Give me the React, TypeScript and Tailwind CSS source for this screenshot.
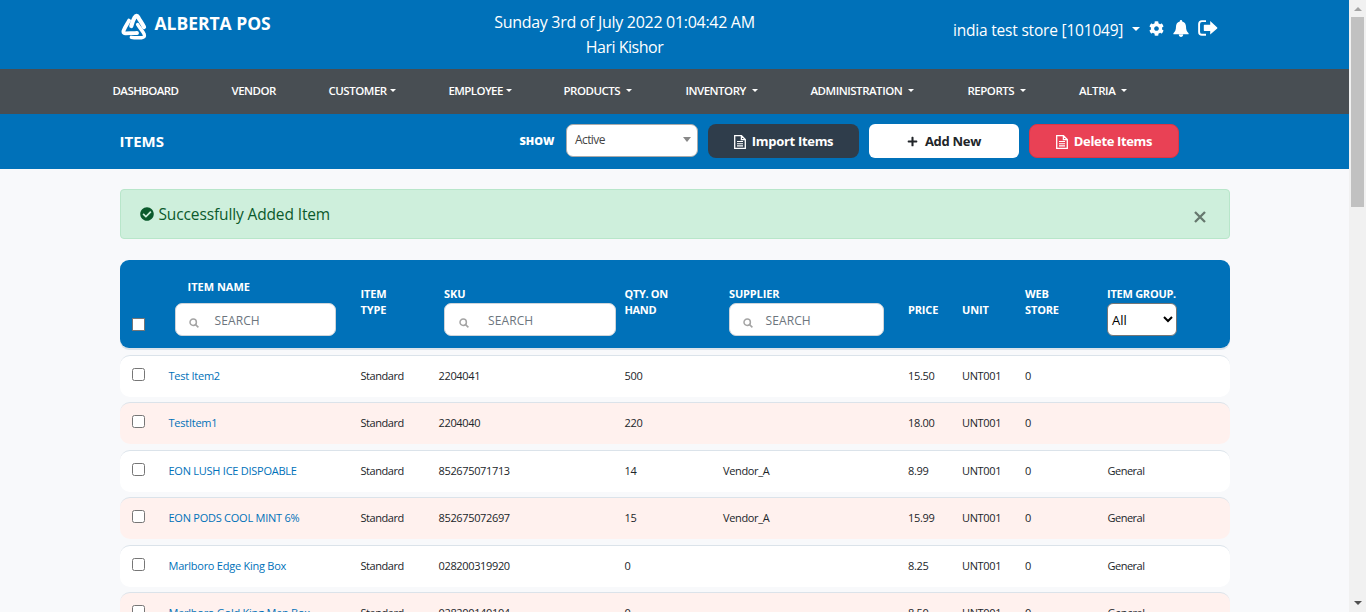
import React from "react";
import { FaCog, FaPlus, FaCheckCircle } from "react-icons/fa";

const Caret = ({ className = "" }: { className?: string }) => (
  <span className={"inline-block border-x-[3.5px] border-t-[3.5px] border-x-transparent border-t-white " + className} />
);

const FileIcon = () => (
  <svg viewBox="0 0 12 14" className="mt-[1px] h-[14px] w-[12px]" fill="none" stroke="currentColor" strokeWidth="1.3">
    <path d="M.7.7H7.5L11.3 4.5V13.3H.7ZM7.4.9V4.7H11.2" />
    <path d="M3 6.5H9M3 8.7H9M3 10.9H9" strokeWidth="1.1" />
  </svg>
);

const nav = [
  { t: "DASHBOARD", w: "w-[119px]", k: "tracking-[-0.56px]", c: "" },
  { t: "VENDOR", w: "w-[97px]", k: "tracking-[-0.5px]", c: "" },
  { t: "CUSTOMER", w: "w-[120px]", k: "tracking-[-0.48px]", c: "ml-[3px]" },
  { t: "EMPLOYEE", w: "w-[115px]", k: "tracking-[-0.6px]", c: "ml-[3px]" },
  { t: "PRODUCTS", w: "w-[122px]", k: "tracking-[-0.5px]", c: "ml-[6px]" },
  { t: "INVENTORY", w: "w-[125px]", k: "tracking-[-0.5px]", c: "ml-[6px]" },
  { t: "ADMINISTRATION", w: "w-[157px]", k: "tracking-[-0.48px]", c: "ml-[6px]" },
  { t: "REPORTS", w: "w-[111.5px]", k: "tracking-[-0.5px]", c: "ml-[6px]" },
  { t: "ALTRIA", w: "w-[80px]", k: "tracking-[-0.4px]", c: "ml-[6px]" },
];

const rows = [
  ["Test Item2", "Standard", "2204041", "500", "", "15.50", "UNT001", "0", ""],
  ["TestItem1", "Standard", "2204040", "220", "", "18.00", "UNT001", "0", ""],
  ["EON LUSH ICE DISPOABLE", "Standard", "852675071713", "14", "Vendor_A", "8.99", "UNT001", "0", "General"],
  ["EON PODS COOL MINT 6%", "Standard", "852675072697", "15", "Vendor_A", "15.99", "UNT001", "0", "General"],
  ["Marlboro Edge King Box", "Standard", "028200319920", "0", "", "8.25", "UNT001", "0", "General"],
  ["Marlboro Gold King Men Box", "Standard", "028200140104", "0", "", "8.50", "UNT001", "0", "General"],
];

const Check = ({ className = "" }: { className?: string }) => (
  <span className={"block size-[13px] shrink-0 rounded-[2.5px] border border-[#767676] bg-white " + className} />
);

const Search = ({ w, gap, icon }: { w: string; gap: string; icon: string }) => (
  <div className={"flex h-[33px] items-center rounded-[7px] border border-[#ced4da] bg-white " + w + " " + icon}>
    <svg viewBox="0 0 10 10" className="mt-[6px] size-[10px] shrink-0" fill="none" stroke="#a4a4a4" strokeWidth="1.5">
      <circle cx="4.2" cy="4.2" r="3.2" />
      <path d="M6.6 6.6 9.4 9.4" />
    </svg>
    <span className={"pt-[2px] text-[12px] font-normal tracking-[0.1px] text-[#6c757d] " + gap}>SEARCH</span>
  </div>
);

export default function App() {
  return (
    <div className="flex h-[612px] w-[1366px] overflow-hidden bg-[#f8f9fb] font-['Open_Sans','Noto_Sans',sans-serif] text-[#212529]">
      <div className="flex w-[1349px] shrink-0 flex-col overflow-hidden">
        <header className="flex h-[69px] shrink-0 bg-[#0071b9] pl-[121px] text-white">
          <div className="flex w-[264px] items-start pt-[13px]">
            <svg viewBox="0 0 26 27" className="h-[27px] w-[26px]" fill="none" stroke="#fff" strokeLinejoin="round" strokeLinecap="round">
              <path d="M8 7.6 C6.5 10.5 4.2 13.5 2.6 17.6 C1.9 20 3.2 20.4 5 20.3 C9 20 12.5 20.4 16 20" strokeWidth="3.8" />
              <path d="M10.3 13 C11 10 12 7.5 13.6 4.6 C15 2.2 16.3 2.6 17.4 4.6 C18.8 7.4 21 10 23 14" strokeWidth="4.2" />
              <path d="M16.6 11.5 C18.5 15 21.5 17.5 23.2 21.2 C24 23.6 23 24.6 20.6 24.7 C17 24.9 13.5 24.9 10.3 24.3" strokeWidth="3.4" />
            </svg>
            <span className="ml-[7.5px] text-[17.5px] leading-[21px] font-bold tracking-[-0.02px] whitespace-nowrap">ALBERTA POS</span>
          </div>
          <div className="w-[479px] pt-[10px] text-center text-[16px] leading-[25px]">
            <div className="tracking-[-0.3px]">Sunday 3rd of July 2022 01:04:42 AM</div>
            <div className="tracking-[-0.5px]">Hari Kishor</div>
          </div>
          <div className="flex items-start pt-[19px] pl-[89px] text-[15.5px] leading-[23px]">
            <span className="w-[172px] tracking-[-0.2px] whitespace-nowrap">india test store [101049]</span>
            <Caret className="mt-[8px] ml-[7px] border-x-[4px] border-t-[4px]" />
            <FaCog className="mt-[2px] ml-[9px] size-[15px]" />
            <svg viewBox="0 0 16 17" className="mt-[1px] ml-[9px] h-[17px] w-[16px]" fill="currentColor">
              <path d="M8 0C8.8 0 9.2.6 9.2 1.4 11.7 2 13 4 13 6.6 13 10.2 14 11.8 15.6 13.2V14.2H.4V13.2C2 11.8 3 10.2 3 6.6 3 4 4.3 2 6.8 1.4 6.8.6 7.2 0 8 0ZM5.8 14.6H10.2C10.2 16 9.3 16.9 8 16.9S5.8 16 5.8 14.6Z" />
            </svg>
            <svg viewBox="0 0 20 16" className="mt-[1px] ml-[9px] h-[16px] w-[20px]" fill="currentColor">
              <path d="M8 1.1H4Q1.1 1.1 1.1 4V12Q1.1 14.8 4 14.8H8" fill="none" stroke="currentColor" strokeWidth="1.9" />
              <path d="M12.2 1.1 19.2 7.4Q19.6 7.9 19.2 8.4L12.2 14.6V10.9H6.4Q5.8 10.9 5.8 10.3V5.4Q5.8 4.8 6.4 4.8H12.2Z" />
            </svg>
          </div>
        </header>
        <nav className="flex h-[45px] shrink-0 items-center bg-[#484e53] pb-[2px] pl-[112.5px] text-[11.5px] font-semibold text-white">
          {nav.map((n) => (
            <div key={n.t} className={"flex items-center whitespace-nowrap " + n.w}>
              <span className={n.k}>{n.t}</span>
              {n.c && <Caret className={n.c} />}
            </div>
          ))}
        </nav>
        <div className="flex h-[55px] shrink-0 items-center bg-[#0071b9] pb-[1px] pl-[119.5px] text-white">
          <span className="w-[400px] text-[15px] font-bold tracking-[0px]">ITEMS</span>
          <span className="w-[46.5px] text-[11px] font-extrabold">SHOW</span>
          <div className="mb-[1px] flex h-[33px] w-[132px] items-center justify-between rounded-[7px] border border-[#aaa] bg-white pr-[6px] pl-[8px] text-[#444]">
            <span className="mb-[2px] text-[12px] tracking-[-0.6px]">Active</span>
            <span className="mb-[3px] border-x-4 border-t-[5px] border-x-transparent border-t-[#888]" />
          </div>
          <div className="ml-[10px] flex h-[34px] w-[151px] items-center justify-center gap-[6px] rounded-[8px] bg-[#2f3d4b] text-[13px] font-bold">
            <FileIcon />
            <span className="pt-[2px] tracking-[-0.3px]">Import Items</span>
          </div>
          <div className="ml-[10px] flex h-[34px] w-[150px] items-center justify-center gap-[7px] rounded-[6px] bg-white text-[13px] font-bold text-[#212529]">
            <FaPlus className="size-[11px]" />
            <span className="pt-[2px] tracking-[-0.3px]">Add New</span>
          </div>
          <div className="ml-[10px] flex h-[34px] w-[150px] items-center justify-center gap-[6px] rounded-[8px] border border-[#dc3545] bg-[#e94155] text-[13px] font-bold">
            <FileIcon />
            <span className="pt-[2px] tracking-[-0.35px]">Delete Items</span>
          </div>
        </div>

        <main className="flex flex-col pt-[20px] pl-[120px]">
          <div className="flex h-[50px] w-[1110px] items-center rounded-[4px] border border-[#b8e6ca] bg-[#ceefdc] pl-[19px] text-[#0b5a2c]">
            <FaCheckCircle className="size-[14px]" />
            <span className="ml-[4.5px] pt-[2px] text-[15.5px] tracking-[-0.13px]">Successfully Added Item</span>
            <svg viewBox="0 0 12 12" className="mt-[5px] mr-[23px] ml-auto size-[12px]" stroke="#66786e" strokeWidth="2.3">
              <path d="M1 1 11 11M11 1 1 11" />
            </svg>
          </div>

          <div className="mt-[21px] flex h-[88px] w-[1110px] shrink-0 items-start rounded-[9px] bg-[#0071b9] text-[11px] leading-[16px] font-bold text-white shadow-[0_2px_0_#dbe3ea]">
            <div className="w-[55px] pt-[58px] pl-[12px]"><Check className="rounded-none" /></div>
            <div className="w-[185.5px] pt-[19px]">
              <div className="mb-[8px] pl-[12.5px]">ITEM NAME</div>
              <Search w="w-[161px]" icon="pl-[12.5px]" gap="ml-[16px]" />
            </div>
            <div className="w-[83.5px] pt-[26px] tracking-[-0.15px]">ITEM<br />TYPE</div>
            <div className="w-[180.5px] pt-[26px]">
              <div className="mb-[1px]">SKU</div>
              <Search w="w-[172px]" icon="pl-[13.5px]" gap="ml-[19.5px]" />
            </div>
            <div className="w-[104.5px] pt-[26px] tracking-[-0.35px]">QTY. ON<br />HAND</div>
            <div className="w-[179px] pt-[26px]">
              <div className="mb-[1px] tracking-[-0.15px]">SUPPLIER</div>
              <Search w="w-[155px]" icon="pl-[13px]" gap="ml-[12.5px]" />
            </div>
            <div className="w-[54px] pt-[42px] tracking-[-0.15px]">PRICE</div>
            <div className="w-[63px] pt-[42px] tracking-[-0.15px]">UNIT</div>
            <div className="w-[82px] pt-[26px] tracking-[-0.15px]">WEB<br />STORE</div>
            <div className="pt-[26px]">
              <div className="mb-[1px] tracking-[-0.25px] whitespace-nowrap">ITEM GROUP.</div>
              <div className="flex h-[33px] w-[70px] items-center justify-between rounded-[6px] border border-[#767676] bg-white pr-[3px] pl-[4px] text-[13px] font-normal text-black">
                <span>All</span>
                <svg viewBox="0 0 10 7" className="mb-[1px] h-[7px] w-[10px]" fill="none" stroke="#000" strokeWidth="2">
                  <path d="M1 1 5 5 9 1" />
                </svg>
              </div>
            </div>
          </div>

          <div className="mt-[7px] flex flex-col gap-[5.4px]">
            {rows.map((r, i) => (
              <div
                key={i}
                className={"flex h-[42px] w-[1110px] shrink-0 items-center rounded-[10px] border-t border-[#dbe3ea] text-[11px] tracking-[-0.35px] whitespace-nowrap " + (i % 2 ? "bg-[#fff1ee] pb-[1px]" : "bg-white")}
              >
                <div className={"w-[48.5px] pl-[12px] " + (i % 2 ? "pb-[3px]" : "pb-[4px]")}><Check /></div>
                <div className="w-[192px] tracking-[-0.25px] text-[#0071b9]">{r[0]}</div>
                <div className="w-[78px] tracking-[-0.45px]">{r[1]}</div>
                <div className="w-[186px]">{r[2]}</div>
                <div className="w-[98.5px]">{r[3]}</div>
                <div className="w-[185px] tracking-[-0.35px]">{r[4]}</div>
                <div className="w-[54px] tracking-[-0.3px]">{r[5]}</div>
                <div className="w-[63px]">{r[6]}</div>
                <div className="w-[82.5px]">{r[7]}</div>
                <div className="tracking-[-0.5px]">{r[8]}</div>
              </div>
            ))}
          </div>
        </main>
      </div>
      <div className="flex w-[17px] shrink-0 flex-col items-center bg-[#f1f1f1]">
        <span className="mt-[7px] border-x-4 border-b-4 border-x-transparent border-b-[#a3a3a3]" />
        <div className="mt-[6px] ml-[-1px] h-[190px] w-[13px] bg-[#c1c1c1]" />
        <span className="mt-auto mb-[7px] border-x-4 border-t-4 border-x-transparent border-t-[#505050]" />
      </div>
    </div>
  );
}
